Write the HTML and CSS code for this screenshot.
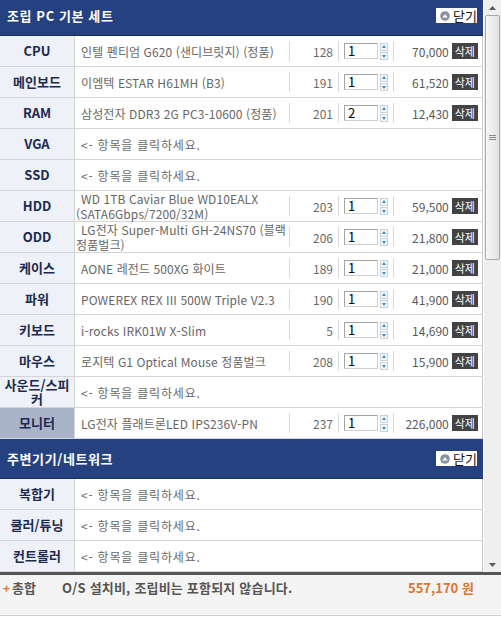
FILE: index.html
```html
<!DOCTYPE html>
<html lang="ko">
<head>
<meta charset="utf-8">
<title>견적서</title>
<link rel="stylesheet" href="styles.css">
</head>
<body>
<div class="frame">
  <div class="viewport">
    <div class="scroll-pane">
      <div class="scroll-content">

        <section class="group">
          <div class="group-head">
            <h2>조립 PC 기본 세트</h2>
            <button class="close" type="button">
              <svg width="10" height="10" viewBox="0 0 10 10"><circle cx="5" cy="5" r="4.8" fill="#8b939e"/><path d="M2.3 6.5 L5 3.2 L7.7 6.5 Z" fill="#fff"/></svg>
              <span>닫기</span>
            </button>
          </div>

          <div class="row">
            <div class="label">CPU</div>
            <div class="name"><span>인텔 펜티엄 G620 (샌디브릿지) (정품)</span></div>
            <div class="num"><div class="sep">128</div></div>
            <div class="qty"><div class="sep"><span class="qty-box">1</span><span class="spin"><i class="up"></i><i class="down"></i></span></div></div>
            <div class="price"><div class="sep"><span class="amount">70,000</span><button class="del" type="button">삭제</button></div></div>
          </div>

          <div class="row">
            <div class="label">메인보드</div>
            <div class="name"><span>이엠텍 ESTAR H61MH (B3)</span></div>
            <div class="num"><div class="sep">191</div></div>
            <div class="qty"><div class="sep"><span class="qty-box">1</span><span class="spin"><i class="up"></i><i class="down"></i></span></div></div>
            <div class="price"><div class="sep"><span class="amount">61,520</span><button class="del" type="button">삭제</button></div></div>
          </div>

          <div class="row">
            <div class="label">RAM</div>
            <div class="name"><span>삼성전자 DDR3 2G PC3-10600 (정품)</span></div>
            <div class="num"><div class="sep">201</div></div>
            <div class="qty"><div class="sep"><span class="qty-box">2</span><span class="spin"><i class="up"></i><i class="down"></i></span></div></div>
            <div class="price"><div class="sep"><span class="amount">12,430</span><button class="del" type="button">삭제</button></div></div>
          </div>

          <div class="row">
            <div class="label">VGA</div>
            <div class="name empty"><span>&lt;- 항목을 클릭하세요.</span></div>
          </div>

          <div class="row">
            <div class="label">SSD</div>
            <div class="name empty"><span>&lt;- 항목을 클릭하세요.</span></div>
          </div>

          <div class="row">
            <div class="label">HDD</div>
            <div class="name"><span>WD 1TB Caviar Blue WD10EALX (SATA6Gbps/7200/32M)</span></div>
            <div class="num"><div class="sep">203</div></div>
            <div class="qty"><div class="sep"><span class="qty-box">1</span><span class="spin"><i class="up"></i><i class="down"></i></span></div></div>
            <div class="price"><div class="sep"><span class="amount">59,500</span><button class="del" type="button">삭제</button></div></div>
          </div>

          <div class="row">
            <div class="label">ODD</div>
            <div class="name"><span>LG전자 Super-Multi GH-24NS70 (블랙 정품벌크)</span></div>
            <div class="num"><div class="sep">206</div></div>
            <div class="qty"><div class="sep"><span class="qty-box">1</span><span class="spin"><i class="up"></i><i class="down"></i></span></div></div>
            <div class="price"><div class="sep"><span class="amount">21,800</span><button class="del" type="button">삭제</button></div></div>
          </div>

          <div class="row">
            <div class="label">케이스</div>
            <div class="name"><span>AONE 레전드 500XG 화이트</span></div>
            <div class="num"><div class="sep">189</div></div>
            <div class="qty"><div class="sep"><span class="qty-box">1</span><span class="spin"><i class="up"></i><i class="down"></i></span></div></div>
            <div class="price"><div class="sep"><span class="amount">21,000</span><button class="del" type="button">삭제</button></div></div>
          </div>

          <div class="row">
            <div class="label">파워</div>
            <div class="name"><span>POWEREX REX III 500W Triple V2.3</span></div>
            <div class="num"><div class="sep">190</div></div>
            <div class="qty"><div class="sep"><span class="qty-box">1</span><span class="spin"><i class="up"></i><i class="down"></i></span></div></div>
            <div class="price"><div class="sep"><span class="amount">41,900</span><button class="del" type="button">삭제</button></div></div>
          </div>

          <div class="row">
            <div class="label">키보드</div>
            <div class="name"><span>i-rocks IRK01W X-Slim</span></div>
            <div class="num"><div class="sep">5</div></div>
            <div class="qty"><div class="sep"><span class="qty-box">1</span><span class="spin"><i class="up"></i><i class="down"></i></span></div></div>
            <div class="price"><div class="sep"><span class="amount">14,690</span><button class="del" type="button">삭제</button></div></div>
          </div>

          <div class="row">
            <div class="label">마우스</div>
            <div class="name"><span>로지텍 G1 Optical Mouse 정품벌크</span></div>
            <div class="num"><div class="sep">208</div></div>
            <div class="qty"><div class="sep"><span class="qty-box">1</span><span class="spin"><i class="up"></i><i class="down"></i></span></div></div>
            <div class="price"><div class="sep"><span class="amount">15,900</span><button class="del" type="button">삭제</button></div></div>
          </div>

          <div class="row">
            <div class="label">사운드/스피커</div>
            <div class="name empty"><span>&lt;- 항목을 클릭하세요.</span></div>
          </div>

          <div class="row">
            <div class="label active">모니터</div>
            <div class="name"><span>LG전자 플래트론LED IPS236V-PN</span></div>
            <div class="num"><div class="sep">237</div></div>
            <div class="qty"><div class="sep"><span class="qty-box">1</span><span class="spin"><i class="up"></i><i class="down"></i></span></div></div>
            <div class="price"><div class="sep"><span class="amount">226,000</span><button class="del" type="button">삭제</button></div></div>
          </div>
        </section>

        <section class="group">
          <div class="group-head">
            <h2>주변기기/네트워크</h2>
            <button class="close" type="button">
              <svg width="10" height="10" viewBox="0 0 10 10"><circle cx="5" cy="5" r="4.8" fill="#8b939e"/><path d="M2.3 6.5 L5 3.2 L7.7 6.5 Z" fill="#fff"/></svg>
              <span>닫기</span>
            </button>
          </div>

          <div class="row">
            <div class="label">복합기</div>
            <div class="name empty"><span>&lt;- 항목을 클릭하세요.</span></div>
          </div>

          <div class="row">
            <div class="label">쿨러/튜닝</div>
            <div class="name empty"><span>&lt;- 항목을 클릭하세요.</span></div>
          </div>

          <div class="row">
            <div class="label">컨트롤러</div>
            <div class="name empty"><span>&lt;- 항목을 클릭하세요.</span></div>
          </div>
        </section>

      </div>
    </div>

    <div class="scrollbar">
      <div class="sb-btn"><svg width="7" height="4" viewBox="0 0 7 4"><path d="M0 4 L3.5 0 L7 4 Z" fill="#5a5a5a"/></svg></div>
      <div class="sb-thumb"><svg width="7" height="6" viewBox="0 0 7 6"><path d="M0 0.5 H7 M0 2.5 H7 M0 4.5 H7" stroke="#8a8a8a" stroke-width="1"/></svg></div>
      <div class="sb-track"></div>
      <div class="sb-btn"><svg width="7" height="4" viewBox="0 0 7 4"><path d="M0 0 L3.5 4 L7 0 Z" fill="#5a5a5a"/></svg></div>
    </div>
  </div>

  <div class="total">
    <span class="plus">+</span>
    <span class="total-label">총합</span>
    <span class="total-note">O/S 설치비, 조립비는 포함되지 않습니다.</span>
    <span class="total-sum">557,170 원</span>
  </div>
</div>
</body>
</html>
```

FILE: styles.css
```css
* {
  box-sizing: border-box;
}

html, body {
  margin: 0;
  padding: 0;
  background: #fff;
}

body {
  font-family: "Noto Sans CJK KR", "Liberation Sans", sans-serif;
  font-size: 12px;
  color: #555;
}

.frame {
  width: 501px;
}

/* scrolling list area */
.viewport {
  display: flex;
  height: 572px;
  overflow: hidden;
}

.scroll-pane {
  width: 484px;
  overflow: hidden;
}

.scroll-content {
  margin-top: -4px;
}

/* group header bar */
.group-head {
  width: 483px;
  height: 40px;
  background: #25417f;
  border-bottom: 1px solid #182c5c;
  display: flex;
  align-items: center;
  justify-content: space-between;
  padding: 0 7px 0 7px;
}

.group-head h2 {
  margin: 0;
  font-size: 13px;
  font-weight: 700;
  color: #fff;
  letter-spacing: 0.6px;
  line-height: 16px;
}

.close {
  display: flex;
  align-items: center;
  gap: 3px;
  height: 15px;
  width: 41px;
  padding: 0 0 0 4px;
  margin-right: -1px;
  border: 0;
  background: #fff;
  font-family: inherit;
  font-size: 13px;
  line-height: 15px;
  color: #111;
}

/* item rows */
.row {
  width: 483px;
  height: 31px;
  display: grid;
  grid-template-columns: 75px 214px 49px 55px 89px;
  border-bottom: 1px solid #d5d5d5;
  border-right: 1px solid #c9c9c9;
}

.label {
  background: #eef1f7;
  border-right: 1px solid #d5d5d5;
  display: flex;
  align-items: center;
  justify-content: center;
  text-align: center;
  font-size: 13px;
  font-weight: 700;
  line-height: 14px;
  color: #1c2a4f;
}

.label.active {
  background: #aab4c8;
}

.name {
  display: flex;
  align-items: center;
  padding-left: 1px;
  text-indent: 5px;
  line-height: 15px;
  letter-spacing: 0.1px;
  word-break: keep-all;
  color: #666;
}

.name.empty {
  grid-column: 2 / span 4;
  letter-spacing: 0.8px;
  color: #6a6a6a;
}

.num,
.qty,
.price {
  display: flex;
  align-items: center;
}

.sep {
  width: 100%;
  height: 20px;
  border-left: 1px solid #dadada;
  display: flex;
  align-items: center;
}

.num .sep {
  justify-content: flex-end;
  padding-right: 5px;
  color: #6a6a6a;
}

.qty .sep {
  padding-left: 5px;
  gap: 2px;
}

.qty-box {
  width: 34px;
  height: 16px;
  border: 1px solid #a4a4a4;
  border-right-color: #d0d0d0;
  border-bottom-color: #d0d0d0;
  background: #fff;
  color: #000;
  font-size: 13px;
  line-height: 14px;
  padding-left: 3px;
}

.spin {
  display: flex;
  flex-direction: column;
  gap: 1px;
}

.spin i {
  display: block;
  width: 8px;
  height: 8px;
  border: 1px solid #c5d3e0;
  background: #f4f8fb;
  position: relative;
}

.spin i::after {
  content: "";
  position: absolute;
  left: 1px;
  border-left: 2px solid transparent;
  border-right: 2px solid transparent;
}

.spin .up::after {
  top: 1px;
  border-bottom: 3px solid #3b8dc7;
}

.spin .down::after {
  top: 2px;
  border-top: 3px solid #3b8dc7;
}

.price .sep {
  justify-content: flex-end;
  padding-right: 4px;
  gap: 3px;
}

.amount {
  color: #5a5a5a;
}

.del {
  height: 16px;
  padding: 0 3px;
  border: 0;
  background: #434343;
  color: #fff;
  font-family: inherit;
  font-size: 11px;
  line-height: 16px;
}

/* fake scrollbar column */
.scrollbar {
  width: 17px;
  background: #efefef;
  display: flex;
  flex-direction: column;
}

.sb-btn {
  height: 15px;
  display: flex;
  align-items: center;
  justify-content: center;
}

.sb-thumb {
  height: 245px;
  margin: 0 1px;
  border: 1px solid #a9a9a9;
  border-radius: 2px;
  background: linear-gradient(to right, #f7f7f7, #e2e2e2);
  display: flex;
  align-items: center;
  justify-content: center;
}

.sb-track {
  flex: 1;
}

/* totals bar */
.total {
  height: 44px;
  border-top: 3px solid #555;
  border-bottom: 1px solid #cfcfcf;
  background: #f4f4f4;
  display: flex;
  align-items: flex-start;
  padding: 5px 0 0 3px;
  font-size: 13px;
  font-weight: 700;
  line-height: 16px;
  color: #555;
}

.plus {
  color: #e8731f;
  width: 9px;
  font-size: 12px;
}

.total-label {
  width: 50px;
}

.total-note {
  width: 346px;
  letter-spacing: 0.2px;
}

.total-sum {
  color: #e0742a;
}
```
